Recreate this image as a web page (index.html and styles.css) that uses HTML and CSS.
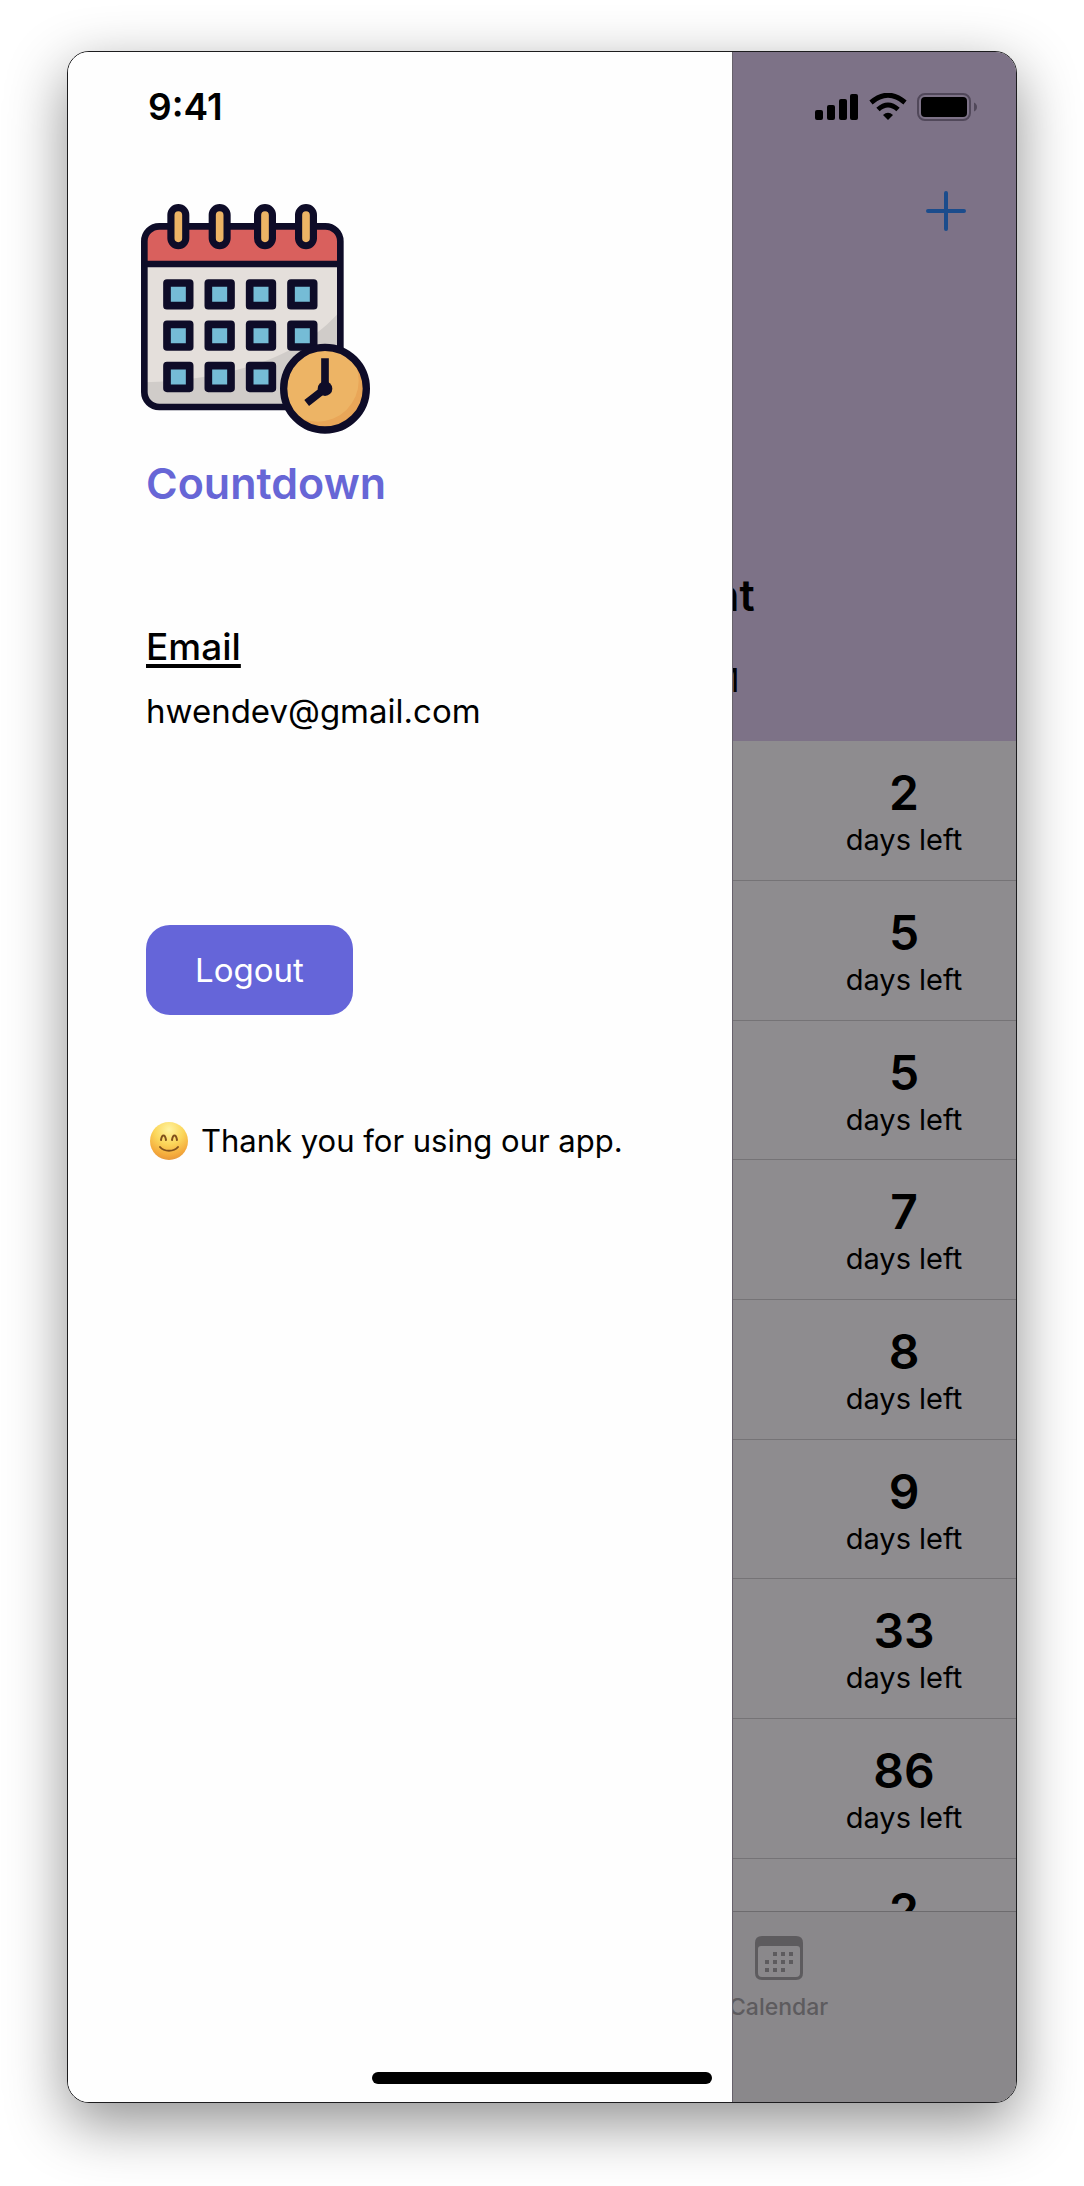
FILE: index.html
```html
<!DOCTYPE html>
<html lang="en">
<head>
<meta charset="utf-8">
<meta name="viewport" content="width=device-width, initial-scale=1">
<title>Countdown</title>
<link rel="stylesheet" href="styles.css">
</head>
<body>
<div class="device">
  <aside class="drawer">
    <time class="clock">9:41</time>
    <svg class="logo" viewBox="0 0 690 690" aria-hidden="true">
      <defs>
        <clipPath id="page"><rect x="10" y="67" width="588" height="542" rx="45"/></clipPath>
        <clipPath id="face"><circle cx="552" cy="554" r="124"/></clipPath>
      </defs>
      <g clip-path="url(#page)">
        <rect x="10" y="67" width="588" height="542" fill="#e4dfdb"/>
        <path d="M10 535C240 530 470 470 598 320V620H10Z" fill="#d0ccc9"/>
        <rect x="10" y="67" width="588" height="113" fill="#d9605d"/>
      </g>
      <g fill="none" stroke="#0e0c28" stroke-width="20">
        <rect x="10" y="67" width="588" height="542" rx="45"/>
        <path d="M10 180H598"/>
      </g>
      <g stroke-linecap="round">
        <path d="M112 33V103M236 33V103M372 33V103M495 33V103" stroke="#0e0c28" stroke-width="66"/>
        <path d="M112 33V103M236 33V103M372 33V103M495 33V103" stroke="#edb465" stroke-width="23"/>
      </g>
      <g fill="#75bcd6" stroke="#0e0c28" stroke-width="23" stroke-linejoin="round">
        <path d="M78 237h68v68h-68zM202 237h68v68h-68zM326 237h68v68h-68zM450 237h68v68h-68z"/>
        <path d="M78 361h68v68h-68zM202 361h68v68h-68zM326 361h68v68h-68zM450 361h68v68h-68z"/>
        <path d="M78 485h68v68h-68zM202 485h68v68h-68zM326 485h68v68h-68z"/>
      </g>
      <circle cx="552" cy="554" r="124" fill="#e9a658"/>
      <circle cx="530" cy="530" r="123" fill="#edb465" clip-path="url(#face)"/>
      <circle cx="552" cy="554" r="124" fill="none" stroke="#0e0c28" stroke-width="22"/>
      <path d="M552 463V554L497 597" fill="none" stroke="#0e0c28" stroke-width="23"/>
      <circle cx="552" cy="554" r="22" fill="#0e0c28"/>
    </svg>
    <h1 class="brand">Countdown</h1>
    <h2 class="label">Email</h2>
    <p class="email">hwendev@gmail.com</p>
    <button class="logout" type="button">Logout</button>
    <p class="thanks">
      <svg class="smile" viewBox="0 0 38 38" role="img" aria-label="Smiling face">
        <defs>
          <radialGradient id="skin" cx=".5" cy=".2" r=".85">
            <stop offset="0" stop-color="#fff3a0"/>
            <stop offset=".45" stop-color="#fbd65a"/>
            <stop offset=".8" stop-color="#f4a93b"/>
            <stop offset="1" stop-color="#e2923c"/>
          </radialGradient>
        </defs>
        <circle cx="19" cy="19" r="19" fill="url(#skin)"/>
        <path d="M11 18C12 12 15 12 16 18M22 18C23 12 26 12 27 18" fill="none" stroke="#80501c" stroke-width="2" stroke-linecap="round"/>
        <path d="M10 25C14 30 24 30 28 25" fill="none" stroke="#80501c" stroke-width="2" stroke-linecap="round"/>
      </svg>
      Thank you for using our app.
    </p>
  </aside>

  <main class="screen">
    <header class="hero">
      <svg class="status" viewBox="0 0 163 28" role="img" aria-label="Signal, Wi-Fi and battery">
        <rect x="0" y="17" width="8" height="10" rx="2"/>
        <rect x="12" y="12" width="8" height="15" rx="2"/>
        <rect x="24" y="6" width="8" height="21" rx="2"/>
        <rect x="35" y="1" width="8" height="26" rx="2"/>
        <g fill="none" stroke="#000" stroke-width="5">
          <path d="M56 9.500Q73-5 90 9.500"/>
          <path d="M63 16.500Q73 7.500 83 16.500"/>
        </g>
        <path d="M68 22Q73 17.500 78 22L73 27Z"/>
        <rect x="103" y="1" width="52" height="26" rx="7" fill="none" stroke="#51485a" stroke-width="2"/>
        <rect x="106" y="4" width="46" height="20" rx="4"/>
        <path d="M159 9.500Q162 11 162 14Q162 17 159 18.500Z" fill="#51485a"/>
      </svg>
      <button class="add" type="button" aria-label="Add event">
        <svg viewBox="0 0 40 40" aria-hidden="true"><path d="M20 2V38M2 20H38"/></svg>
      </button>
      <p class="event">nt</p>
      <p class="event-time">M</p>
    </header>
    <ul class="days">
      <li><div><strong>2</strong><span>days left</span></div></li>
      <li><div><strong>5</strong><span>days left</span></div></li>
      <li><div><strong>5</strong><span>days left</span></div></li>
      <li><div><strong>7</strong><span>days left</span></div></li>
      <li><div><strong>8</strong><span>days left</span></div></li>
      <li><div><strong>9</strong><span>days left</span></div></li>
      <li><div><strong>33</strong><span>days left</span></div></li>
      <li><div><strong>86</strong><span>days left</span></div></li>
      <li><div><strong>2</strong></div></li>
    </ul>
    <nav class="tabs">
      <a class="tab" href="#calendar">
        <svg viewBox="0 0 48 44" aria-hidden="true">
          <path fill-rule="evenodd" d="M7 0H41Q48 0 48 7V37Q48 44 41 44H7Q0 44 0 37V7Q0 0 7 0ZM6 10Q3 10 3 13V37Q3 41 7 41H41Q45 41 45 37V13Q45 10 42 10Z"/>
          <path d="M20 16v4M28 16v4M36 16v4M12 24v4M20 24v4M28 24v4M36 24v4M12 32v4M20 32v4M28 32v4" stroke-width="4"/>
        </svg>
        <span>Calendar</span>
      </a>
    </nav>
  </main>
  <div class="home-indicator"></div>
</div>
</body>
</html>
```
FILE: styles.css
```css
* {
  box-sizing: border-box;
  margin: 0;
  padding: 0;
}

body {
  padding: 51px 67px 83px;
  background: #fff;
  color: #000;
  font-family: Inter, "Liberation Sans", sans-serif;
}

svg {
  display: block;
}

.device {
  position: relative;
  display: grid;
  grid-template-columns: 7fr 3fr;
  grid-template-rows: minmax(0, 1fr);
  height: calc(100vh - 134px);
  min-height: 1400px;
  overflow: hidden;
  border: 1px solid #1c1c1e;
  border-radius: 22px;
  box-shadow: 0 20px 60px rgba(0, 0, 0, 0.44);
}

/* Drawer */
.drawer {
  display: flex;
  flex-direction: column;
  align-items: flex-start;
  min-width: 0;
  padding: 33px 24px 0 78px;
  background: #fefefe;
}

.clock {
  padding-left: 2px;
  font-size: 37px;
  font-weight: 600;
  line-height: 44px;
}

.logo {
  width: 230px;
  height: 230px;
  margin: 75px 0 23px -5px;
}

.brand {
  color: #6766d6;
  font-size: 43px;
  font-weight: 600;
  line-height: 52px;
}

.label {
  margin-top: 116px;
  font-size: 37px;
  font-weight: 500;
  line-height: 44px;
  text-decoration: underline;
  text-decoration-thickness: 4px;
  text-underline-offset: 4px;
}

.email {
  margin-top: 22px;
  font-size: 33px;
  line-height: 40px;
}

.logout {
  height: 90px;
  margin-top: 194px;
  padding: 0 49px;
  border: 0;
  border-radius: 24px;
  background: #6565d9;
  color: #fff;
  font: 33px/40px Inter, "Liberation Sans", sans-serif;
}

.thanks {
  display: flex;
  align-items: center;
  gap: 13px;
  margin-top: 106px;
  padding-left: 4px;
  font-size: 31px;
  line-height: 40px;
  white-space: nowrap;
}

.smile {
  width: 38px;
  height: 38px;
}

/* Dimmed screen behind the drawer */
.screen {
  display: flex;
  flex-direction: column;
  min-width: 0;
  overflow: hidden;
  border-left: 1px solid #67616b;
  background: #8e8c8f;
}

.hero {
  display: flex;
  flex-direction: column;
  align-items: flex-start;
  padding: 41px 0;
  background: #7d7287;
}

.status {
  align-self: flex-end;
  width: 163px;
  height: 28px;
  margin-right: 38px;
}

.add {
  align-self: flex-end;
  width: 40px;
  height: 40px;
  margin: 70px 50px 338px 0;
  border: 0;
  background: none;
}

.add path {
  fill: none;
  stroke: #1b4c8c;
  stroke-width: 4;
  stroke-linecap: round;
}

.event,
.event-time {
  display: flex;
  justify-content: flex-end;
}

.event {
  width: 22px;
  margin-bottom: 39px;
  font-size: 43px;
  font-weight: 600;
  line-height: 52px;
}

.event-time {
  width: 7px;
  font-size: 33px;
  line-height: 40px;
}

.days {
  flex: 1 1 0;
  min-height: 0;
  overflow: hidden;
  list-style: none;
}

.days li {
  display: flex;
  justify-content: flex-end;
  height: 140px;
  padding: 24px 53px 0 0;
  border-bottom: 1px solid #757376;
}

.days li:nth-child(3n) {
  height: 139px;
}

.days div {
  display: flex;
  flex-direction: column;
  align-items: center;
  min-width: 118px;
}

.days strong {
  font-size: 48px;
  font-weight: 600;
  line-height: 56px;
}

.days span {
  font-size: 29px;
  line-height: 38px;
}

.tabs {
  display: flex;
  height: 191px;
  padding-top: 24px;
  border-top: 1px solid #6d6b6e;
  background: #8a888b;
}

.tab {
  display: flex;
  flex-direction: column;
  align-items: center;
  gap: 13px;
  width: 92px;
  color: #5d5b5e;
  font-size: 23px;
  font-weight: 500;
  line-height: 28px;
  text-decoration: none;
}

.tab svg {
  width: 48px;
  height: 44px;
  fill: currentColor;
  stroke: currentColor;
  stroke-width: 0;
}

.home-indicator {
  position: absolute;
  bottom: 18px;
  left: 50%;
  width: 340px;
  height: 12px;
  margin-left: -170px;
  border-radius: 6px;
  background: #000;
}
```
